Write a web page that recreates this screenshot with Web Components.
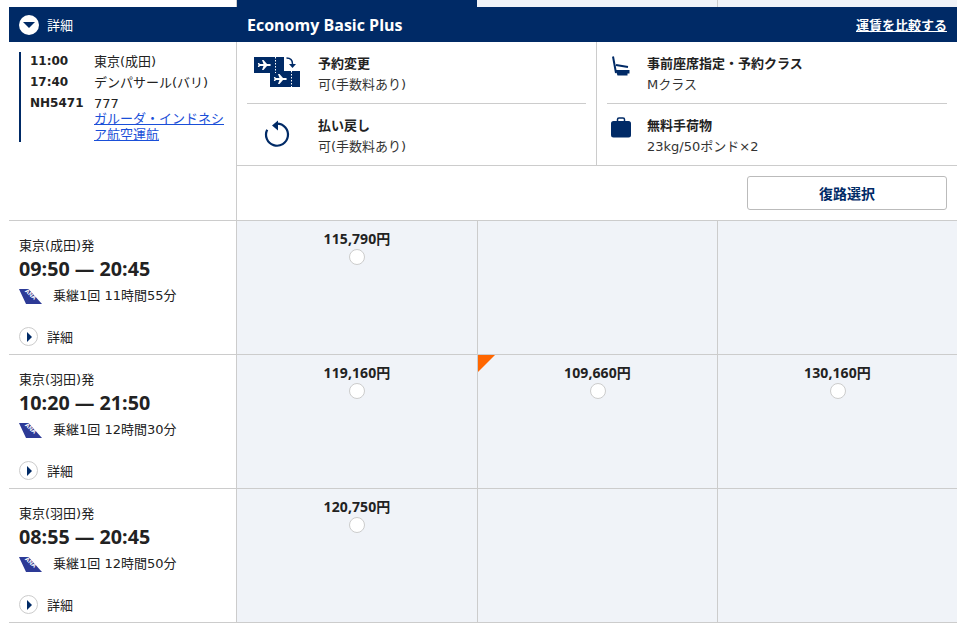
<!DOCTYPE html>
<html lang="ja">
<head>
<meta charset="utf-8">
<style>
  html, body { margin: 0; background: #fff; }
  body {
    padding: 0 13px 15px 9px;
    color: #222;
    font: 13px "DejaVu Sans", "Noto Sans CJK JP", sans-serif;
  }
  search-results { width: 948px; }
</style>
</head>
<body>
<search-results>
  <detail-panel slot="detail"></detail-panel>
  <fare-panel slot="fare"></fare-panel>
  <flight-row from="東京(成田)発" time="09:50 — 20:45" via="乗継1回 11時間55分" prices="115,790円||"></flight-row>
  <flight-row from="東京(羽田)発" time="10:20 — 21:50" via="乗継1回 12時間30分" prices="119,160円|109,660円|130,160円" flag="1"></flight-row>
  <flight-row from="東京(羽田)発" time="08:55 — 20:45" via="乗継1回 12時間50分" prices="120,750円||"></flight-row>
</search-results>

<script>
const FONT = '"DejaVu Sans", "Noto Sans CJK JP", sans-serif';
const BOLD_FONT = '"Open Sans", "Noto Sans CJK JP", sans-serif';
const NAVY = '#002a66';

class SearchResults extends HTMLElement {
  constructor() {
    super();
    this.attachShadow({ mode: 'open' }).innerHTML = `
    <style>
      :host { display: block; }
      .top { display: grid; grid-template-columns: 228px 720px; height: 221px; }
    </style>
    <div class="top">
      <slot name="detail"></slot>
      <slot name="fare"></slot>
    </div>
    <slot></slot>`;
  }
}

class DetailPanel extends HTMLElement {
  constructor() {
    super();
    this.attachShadow({ mode: 'open' }).innerHTML = `
    <style>
      :host { display: block; border-right: 1px solid #ccc; border-bottom: 1px solid #ccc; box-sizing: border-box; padding-top: 7px; }
      .head { display: flex; align-items: center; gap: 8px; height: 35px; padding-left: 10px; background: ${NAVY}; color: #fff; margin-right: -1px; }
      .dot { width: 20px; height: 20px; border-radius: 50%; background: #fff; display: flex; align-items: center; justify-content: center; }
      .dot i { border-style: solid; border-color: ${NAVY} transparent transparent; border-width: 6px 6px 0; margin-top: 1px; }
      .legs { display: flow-root; margin: 10px 0 0 10px; border-left: 2px solid ${NAVY}; padding-left: 9px; height: 90px; }
      .rows { display: grid; grid-template-columns: 64px 1fr; line-height: 21px; margin-top: -1px; }
      b { font-size: 12px; font-weight: 700; }
      a { color: #1a4fd8; text-decoration: underline; display: block; line-height: 16px; width: 132px; margin-top: -3px; }
    </style>
    <div class="head"><span class="dot"><i></i></span>詳細</div>
    <div class="legs"><div class="rows">
      <b>11:00</b><span>東京(成田)</span>
      <b>17:40</b><span>デンパサール(バリ)</span>
      <b>NH5471</b><span>777<a>ガルーダ・インドネシア航空運航</a></span>
    </div></div>`;
  }
}

class FarePanel extends HTMLElement {
  constructor() {
    super();
    this.attachShadow({ mode: 'open' }).innerHTML = `
    <style>
      :host { display: block; }
      .tabs { display: grid; grid-template-columns: 240px 241px 239px; height: 7px; }
      .tabs div:nth-child(1) { background: ${NAVY}; }
      .tabs div:nth-child(2) { background: #f0f3f8; border-right: 1px solid #ccc; }
      .tabs div:nth-child(3) { background: #f0f3f8; }
      .head { height: 35px; background: ${NAVY}; color: #fff; display: flex; align-items: center; justify-content: space-between; padding: 0 10px; }
      .name { font: 700 16px ${BOLD_FONT}; }
      .cmp { color: #fff; font-weight: 700; text-decoration: underline; }
      .info { display: grid; grid-template-columns: 360px 360px; height: 123px; border-bottom: 1px solid #ccc; }
      .col { padding: 0 10px; display: grid; grid-template-rows: 61px 62px; }
      .col:first-child { border-right: 1px solid #ccc; box-sizing: border-box; }
      .foot { height: 55px; display: flex; justify-content: flex-end; align-items: flex-start; padding: 10px 10px 0 0; box-sizing: border-box; border-bottom: 1px solid #ccc; }
      button { width: 200px; height: 34px; border: 1px solid #bbb; border-radius: 3px; background: #fff; color: ${NAVY}; font: 700 14px ${FONT}; padding: 0; }
      fare-item + fare-item { border-top: 1px solid #ccc; }
    </style>
    <div class="tabs"><div></div><div></div><div></div></div>
    <div class="head"><span class="name">Economy Basic Plus</span><span class="cmp">運賃を比較する</span></div>
    <div class="info">
      <div class="col">
        <fare-item label="予約変更" value="可(手数料あり)">
          <svg width="46" height="32" viewBox="0 0 46 32">
            <path fill="${NAVY}" d="M0 2h30v16H0z"/>
            <path fill="${NAVY}" d="M16 16h30v16H16z"/>
            <path fill="none" stroke="#fff" stroke-dasharray="1.5 1.5" d="M21.5 2v16M37.5 16v16"/>
            <path fill="#fff" d="M6 9h3.500L8 5h1.500L13 9h3c1 0 1 2 0 2h-3l-3.500 4H8l1.500-4H6l-1 1H3.800l.7-2-.7-2H5z"/>
            <path fill="#fff" d="M22 23h3.500L24 19h1.500l3.500 4h3c1 0 1 2 0 2h-3l-3.500 4H24l1.500-4H22l-1 1h-1.200l.7-2-.7-2H21z"/>
            <path fill="none" stroke="${NAVY}" stroke-width="1.500" d="M32.500 3c4 0 6 2 6 6"/>
            <path fill="${NAVY}" d="M35 9h7l-3.500 4z"/>
          </svg>
        </fare-item>
        <fare-item label="払い戻し" value="可(手数料あり)">
          <svg width="46" height="32" viewBox="0 0 46 32">
            <path fill="none" stroke="${NAVY}" stroke-width="2.200" d="M23 6.700A11 11 0 1 1 13.200 12.700"/>
            <path fill="${NAVY}" d="M24 3.500v10l-6-5z"/>
          </svg>
        </fare-item>
      </div>
      <div class="col">
        <fare-item label="事前座席指定・予約クラス" value="Mクラス" narrow="1">
          <svg width="20" height="24" viewBox="0 0 20 24">
            <path fill="none" stroke="${NAVY}" stroke-width="2" d="M2 1.500 5 18M5 10l12 2"/>
            <path fill="${NAVY}" d="M4.500 15h14v3.500h-2V20.500H6.500z"/>
          </svg>
        </fare-item>
        <fare-item label="無料手荷物" value="23kg/50ポンド×2" narrow="1">
          <svg width="20" height="21" viewBox="0 0 20 21">
            <path fill="none" stroke="${NAVY}" stroke-width="1.500" d="M6.500 5V2.500c0-1 .5-1.500 1.500-1.500h4c1 0 1.500.5 1.500 1.500V5"/>
            <rect y="4" width="20" height="16.500" rx="2.500" fill="${NAVY}"/>
          </svg>
        </fare-item>
      </div>
    </div>
    <div class="foot"><button>復路選択</button></div>`;
  }
}

class FareItem extends HTMLElement {
  constructor() {
    super();
    this.attachShadow({ mode: 'open' });
  }
  connectedCallback() {
    const narrow = this.getAttribute('narrow');
    this.shadowRoot.innerHTML = `
    <style>
      :host { display: flex; }
      .icon { width: ${narrow ? 40 : 71}px; flex: none; padding: 13px 0 0 ${narrow ? 4 : 7}px; box-sizing: border-box; }
      .txt { padding-top: 11px; line-height: 21px; }
      b { display: block; font-weight: 700; }
      span { color: #333; }
    </style>
    <div class="icon"><slot></slot></div>
    <div class="txt"><b>${this.getAttribute('label')}</b><span>${this.getAttribute('value')}</span></div>`;
  }
}

class FlightRow extends HTMLElement {
  constructor() {
    super();
    this.attachShadow({ mode: 'open' });
  }
  connectedCallback() {
    const prices = this.getAttribute('prices').split('|');
    const cells = prices.map((p, i) => {
      const flag = this.getAttribute('flag') && i === 1 ? ' flag="1"' : '';
      return `<fare-cell price="${p}"${flag}></fare-cell>`;
    }).join('');
    this.shadowRoot.innerHTML = `
    <style>
      :host { display: grid; grid-template-columns: 228px 241px 240px 239px; height: 134px; border-bottom: 1px solid #ccc; box-sizing: border-box; }
      .info { border-right: 1px solid #ccc; padding: 18px 0 0 10px; box-sizing: border-box; display: flex; flex-direction: column; }
      .from { line-height: 14px; }
      .time { font: 700 19.7px/24px ${BOLD_FONT}; margin-top: 4px; }
      .via { display: flex; align-items: center; gap: 11px; margin-top: 6px; line-height: 18px; }
      .more { display: flex; align-items: center; gap: 9px; margin-top: 22px; }
      .tail { display: block; width: 23px; height: 15px; }
      .circle { width: 17px; height: 17px; border: 1px solid #ccc; border-radius: 50%; display: flex; align-items: center; justify-content: center; }
      .circle i { border-style: solid; border-color: transparent transparent transparent ${NAVY}; border-width: 5px 0 5px 5px; margin-left: 1px; }
    </style>
    <div class="info">
      <div class="from">${this.getAttribute('from')}</div>
      <div class="time">${this.getAttribute('time')}</div>
      <div class="via">
        <svg class="tail" viewBox="0 0 23 15"><path fill="#2d3a96" d="M0 0h9.500L23 15H7z"/><text x="0" y="0" transform="translate(5.500 2.500) rotate(42)" fill="#fff" font-family="Liberation Sans, sans-serif" font-size="6" font-weight="700">ANA</text></svg>
        <span>${this.getAttribute('via')}</span>
      </div>
      <div class="more"><span class="circle"><i></i></span>詳細</div>
    </div>
    ${cells}`;
  }
}

class FareCell extends HTMLElement {
  constructor() {
    super();
    this.attachShadow({ mode: 'open' });
  }
  connectedCallback() {
    const price = this.getAttribute('price');
    this.shadowRoot.innerHTML = `
    <style>
      :host { display: flex; flex-direction: column; align-items: center; position: relative; background: #f0f3f8; border-right: 1px solid #ccc; box-sizing: border-box; padding-top: 9px; }
      :host(:last-child) { border-right: 0; }
      .price { font: 700 14px/18px ${BOLD_FONT}; letter-spacing: .1px; }
      .radio { width: 14px; height: 14px; border: 1px solid #ccc; border-radius: 50%; background: #fff; margin-top: 1px; }
      .flag { position: absolute; left: 0; top: 0; border-top: 17px solid #f60; border-right: 17px solid transparent; }
    </style>
    ${this.getAttribute('flag') ? '<div class="flag"></div>' : ''}
    ${price ? `<div class="price">${price}</div><div class="radio"></div>` : ''}`;
  }
}

customElements.define('search-results', SearchResults);
customElements.define('detail-panel', DetailPanel);
customElements.define('fare-panel', FarePanel);
customElements.define('fare-item', FareItem);
customElements.define('flight-row', FlightRow);
customElements.define('fare-cell', FareCell);
</script>
</body>
</html>
